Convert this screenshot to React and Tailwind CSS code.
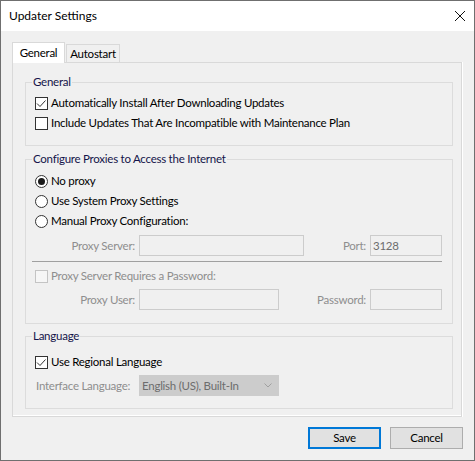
import React from 'react';

const CheckBox = ({ checked, disabled }) => (
  <span
    className={`w-[13px] h-[13px] border flex items-center justify-center shrink-0 ${
      disabled ? 'border-[#c4c4c4] bg-[#f6f6f6]' : 'border-[#333333] bg-white'
    }`}
  >
    {checked && (
      <svg width="11" height="11" viewBox="0 0 11 11">
        <path d="M1 5.5 L4 8.5 L9.5 2.5" stroke="#333333" strokeWidth="1" fill="none" />
      </svg>
    )}
  </span>
);

const Radio = ({ checked }) => (
  <span className="w-[13px] h-[13px] rounded-full border border-[#333333] bg-white flex items-center justify-center shrink-0">
    {checked && <span className="w-[7px] h-[7px] rounded-full bg-[#1a1a1a]" />}
  </span>
);

const Option = ({ children, control, disabled }) => (
  <div className="h-[20px] flex items-center whitespace-nowrap">
    {control}
    <span className={`ml-[3px] ${disabled ? 'text-[#8e8e8e]' : 'text-black'}`}>{children}</span>
  </div>
);

const Field = ({ value, width }) => (
  <div
    className={`h-[21px] ${width} border border-[#cccccc] bg-[#f0f0f0] flex items-center px-[2px] text-[#6d6d6d]`}
  >
    {value}
  </div>
);

const Group = ({ title, className, children }) => (
  <fieldset className={`ml-[12px] w-[428px] border border-[#dcdcdc] p-0 ${className}`}>
    <legend className="ml-[6px] px-[1px] leading-[16px] text-[#14144a] whitespace-nowrap">{title}</legend>
    {children}
  </fieldset>
);

const App = () => {
  return (
    <div className="w-[475px] h-[461px] bg-[#f0f0f0] border border-[#6f6f6f] flex flex-col text-[11.5px] leading-[16px] tracking-[-0.25px] text-black font-['Lato',sans-serif]">
      {/* Title bar */}
      <div className="h-[30px] bg-white flex items-center justify-between pl-[8px] pr-[9px]">
        <span className="text-[12px] tracking-normal">Updater Settings</span>
        <svg width="10" height="10" viewBox="0 0 10 10">
          <path d="M0 0 L10 10 M10 0 L0 10" stroke="#111111" strokeWidth="1" />
        </svg>
      </div>

      <div className="flex-1 flex flex-col pt-[11px] pl-[11px] pr-[11px]">
        {/* Tabs */}
        <div className="h-[20px] flex items-end">
          <div className="relative z-10 h-[21px] w-[53px] -mb-px bg-white border border-b-0 border-[#d9d9d9] flex items-center justify-center">
            General
          </div>
          <div className="h-[18px] w-[54px] ml-px border border-b-0 border-[#d9d9d9] bg-[#f0f0f0] flex items-center justify-center">
            Autostart
          </div>
        </div>

        {/* Tab page */}
        <div className="w-[450px] h-[355px] border border-[#d9d9d9] bg-[#f0f0f0] shadow-[1px_0_0_#ffffff,inset_0_-1px_0_#ffffff] flex flex-col">
          <Group title="General" className="mt-[11px]">
            <div className="pl-[9px] pr-[10px] pt-[3px] pb-[12px]">
              <Option control={<CheckBox checked />}>Automatically Install After Downloading Updates</Option>
              <Option control={<CheckBox />}>Include Updates That Are Incompatible with Maintenance Plan</Option>
            </div>
          </Group>

          <Group title="Configure Proxies to Access the Internet" className="mt-[5px]">
            <div className="pl-[9px] pr-[10px] pt-[4px] pb-[13px]">
              <Option control={<Radio checked />}>No proxy</Option>
              <Option control={<Radio />}>Use System Proxy Settings</Option>
              <Option control={<Radio />}>Manual Proxy Configuration:</Option>
              <div className="mt-[4px] flex items-center text-[#8e8e8e] whitespace-nowrap">
                <span className="w-[100px] text-right">Proxy Server:</span>
                <div className="ml-[4px]">
                  <Field width="w-[165px]" />
                </div>
                <span className="ml-auto">Port:</span>
                <div className="ml-[4px]">
                  <Field width="w-[72px]" value="3128" />
                </div>
              </div>
              <div className="mt-[5px] -ml-[3px] h-px bg-[#a0a0a0]" />
              <div className="mt-[4px]">
                <Option control={<CheckBox disabled />} disabled>
                  Proxy Server Requires a Password:
                </Option>
              </div>
              <div className="mt-[3px] flex items-center text-[#8e8e8e] whitespace-nowrap">
                <span className="w-[100px] text-right">Proxy User:</span>
                <div className="ml-[4px]">
                  <Field width="w-[140px]" />
                </div>
                <span className="ml-auto">Password:</span>
                <div className="ml-[4px]">
                  <Field width="w-[72px]" />
                </div>
              </div>
            </div>
          </Group>

          <Group title="Language" className="mt-[4px]">
            <div className="pl-[9px] pr-[10px] pt-[8px] pb-[12px]">
              <Option control={<CheckBox checked />}>Use Regional Language</Option>
              <div className="mt-[3px] flex items-center text-[#8e8e8e] whitespace-nowrap">
                <span className="w-[100px] pl-px">Interface Language:</span>
                <div className="ml-[4px] h-[21px] w-[140px] bg-[#cccccc] border border-[#cccccc] flex items-center justify-between pl-[2px] pr-[6px] text-[#6d6d6d]">
                  <span>English (US), Built-In</span>
                  <svg width="8" height="5" viewBox="0 0 8 5">
                    <path d="M0.5 0.5 L4 4 L7.5 0.5" stroke="#a0a0a0" strokeWidth="1" fill="none" />
                  </svg>
                </div>
              </div>
            </div>
          </Group>
        </div>

        {/* Dialog buttons */}
        <div className="mt-[10px] flex justify-end gap-[9px]">
          <button className="h-[22px] w-[73px] bg-[#e1e1e1] border-2 border-[#0078d7] text-black">Save</button>
          <button className="h-[22px] w-[73px] bg-[#e1e1e1] border border-[#adadad] text-black">Cancel</button>
        </div>
      </div>
    </div>
  );
};

export default App;
